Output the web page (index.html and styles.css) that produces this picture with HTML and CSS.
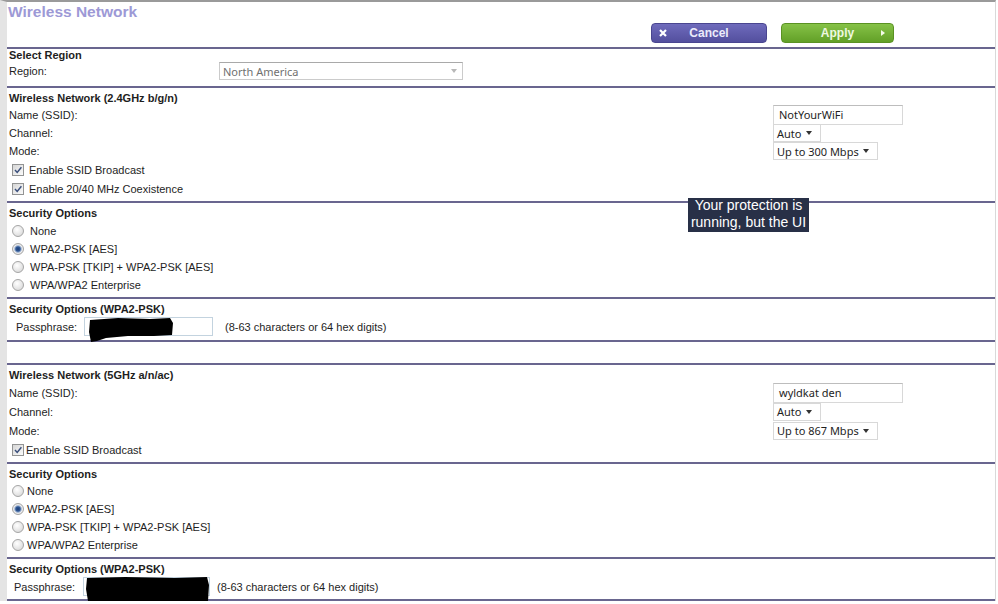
FILE: index.html
```html
<!DOCTYPE html>
<html>
<head>
    <meta charset="utf-8">
    <title>Wireless Network</title>
    <link rel="stylesheet" href="styles.css">
</head>
<body>
<div class="page">
    <div class="header">
        <div class="title">Wireless Network</div>
        <div class="btnbar">
            <div class="btn cancel">
                <svg width="8" height="8" viewBox="0 0 8 8"><path d="M1 1L7 7M7 1L1 7" stroke="#fff" stroke-width="2.2"/></svg>
                <span>Cancel</span><i></i>
            </div>
            <div class="btn apply">
                <i></i><span>Apply</span><span class="tri"></span>
            </div>
        </div>
    </div>

    <div class="sect region">
        <div class="hd">Select Region</div>
        <div class="row">
            <div class="lbl">Region:</div>
            <div class="sel s-region">North America<span class="caret"></span></div>
        </div>
    </div>

    <div class="sect">
        <div class="hd">Wireless Network (2.4GHz b/g/n)</div>
        <div class="row"><div class="lbl">Name (SSID):</div><div class="txt">NotYourWiFi</div></div>
        <div class="row"><div class="lbl">Channel:</div><div class="sel s-auto">Auto<span class="caret"></span></div></div>
        <div class="row"><div class="lbl">Mode:</div><div class="sel s-mode">Up to 300 Mbps<span class="caret"></span></div></div>
        <div class="chk"><span class="box"><svg width="10" height="10" viewBox="0 0 10 10"><path d="M2 5L4.2 7.4L8.4 2.2" fill="none" stroke="#3a4f7c" stroke-width="1.5"/></svg></span>Enable SSID Broadcast</div>
        <div class="chk"><span class="box"><svg width="10" height="10" viewBox="0 0 10 10"><path d="M2 5L4.2 7.4L8.4 2.2" fill="none" stroke="#3a4f7c" stroke-width="1.5"/></svg></span>Enable 20/40 MHz Coexistence</div>
    </div>

    <div class="sect">
        <div class="hd">Security Options</div>
        <div class="opts">
            <div class="opt"><span class="radio"></span>None</div>
            <div class="opt"><span class="radio on"></span>WPA2-PSK [AES]</div>
            <div class="opt"><span class="radio"></span>WPA-PSK [TKIP] + WPA2-PSK [AES]</div>
            <div class="opt"><span class="radio"></span>WPA/WPA2 Enterprise</div>
        </div>
    </div>

    <div class="sect sect-pass">
        <div class="hd">Security Options (WPA2-PSK)</div>
        <div class="pass-row">
            <div class="pass-lbl">Passphrase:</div>
            <div class="pass">
                <svg width="86" height="24" viewBox="0 0 86 24"><path d="M2 2L30 0L62 1L82 0L85 5L84 17L66 18L40 18L18 20L9 23L3 24L1 14Z" fill="#000"/></svg>
            </div>
            <div>(8-63 characters or 64 hex digits)</div>
        </div>
    </div>

    <div class="sect blank"></div>

    <div class="sect loose">
        <div class="hd">Wireless Network (5GHz a/n/ac)</div>
        <div class="row"><div class="lbl">Name (SSID):</div><div class="txt">wyldkat den</div></div>
        <div class="row"><div class="lbl">Channel:</div><div class="sel s-auto">Auto<span class="caret"></span></div></div>
        <div class="row"><div class="lbl">Mode:</div><div class="sel s-mode">Up to 867 Mbps<span class="caret"></span></div></div>
        <div class="chk"><span class="box"><svg width="10" height="10" viewBox="0 0 10 10"><path d="M2 5L4.2 7.4L8.4 2.2" fill="none" stroke="#3a4f7c" stroke-width="1.5"/></svg></span>Enable SSID Broadcast</div>
    </div>

    <div class="sect loose">
        <div class="hd">Security Options</div>
        <div class="opts">
            <div class="opt"><span class="radio"></span>None</div>
            <div class="opt"><span class="radio on"></span>WPA2-PSK [AES]</div>
            <div class="opt"><span class="radio"></span>WPA-PSK [TKIP] + WPA2-PSK [AES]</div>
            <div class="opt"><span class="radio"></span>WPA/WPA2 Enterprise</div>
        </div>
    </div>

    <div class="sect sect-pass loose">
        <div class="hd">Security Options (WPA2-PSK)</div>
        <div class="pass-row">
            <div class="pass-lbl">Passphrase:</div>
            <div class="pass">
                <svg width="124" height="24" viewBox="0 0 124 24"><path d="M2 1L40 0L90 1L122 0L124 8L123 24L60 24L3 24L1 12Z" fill="#000"/></svg>
            </div>
            <div>(8-63 characters or 64 hex digits)</div>
        </div>
    </div>
</div>

<div class="tip"><p>Your protection is<br>running, but the UI</p></div>
</body>
</html>
```

FILE: styles.css
```css
body{
    margin: 0;
    font-family: "Liberation Sans", Arial, sans-serif;
    font-size: 11px;
    color: #1e1e1e;
    background: #fff;
}
.page{
    width: 988px;
    border-left: 7px solid #e4e4e4;
    border-right: 1px solid #d9d9d9;
    border-top: 2px solid #9a9a9a;
}
.header{
    height: 45px;
}
.title{
    font-size: 15.5px;
    font-weight: bold;
    color: #9d99d6;
    line-height: 20px;
    padding-left: 1px;
}
.btnbar{
    display: flex;
    justify-content: flex-end;
    gap: 14px;
    padding-right: 101px;
    margin-top: 1px;
}
.btn{
    display: grid;
    align-items: center;
    justify-items: center;
    height: 20px;
    box-sizing: border-box;
    border-radius: 4px;
    font-size: 12px;
    font-weight: bold;
}
.btn svg{
    display: block;
}
.cancel{
    width: 116px;
    grid-template-columns: 8px 1fr 8px;
    padding: 0 7px;
    background: linear-gradient(#6f6bbc, #534f9e);
    border: 1px solid #4a4690;
    color: #ecebfa;
}
.apply{
    width: 113px;
    grid-template-columns: 4px 1fr 4px;
    padding: 0 8px;
    background: linear-gradient(#86c247, #62a027);
    border: 1px solid #5a9223;
    color: #eef8e0;
}
.tri{
    width: 0;
    height: 0;
    border-top: 3px solid transparent;
    border-bottom: 3px solid transparent;
    border-left: 4px solid #f4fbe8;
}

.sect{
    border-top: 2px solid #69668f;
    padding: 2px 0 3px 2px;
}
.hd{
    font-weight: bold;
    line-height: 16px;
}
.row{
    display: flex;
    align-items: center;
    height: 18px;
}
.lbl{
    flex: 0 0 764px;
}
.loose .row{
    height: 19px;
}

.region{
    padding-top: 0;
    padding-bottom: 5px;
}
.region .hd{
    line-height: 12px;
}
.region .row{
    height: 20px;
}
.region .lbl{
    flex-basis: 210px;
}

.txt{
    width: 130px;
    height: 20px;
    box-sizing: border-box;
    border: 1px solid #d8d8d8;
    border-top-color: #bdbdbd;
    padding-left: 5px;
    font-family: "Noto Sans", sans-serif;
    font-size: 11px;
    line-height: 18px;
}
.sel{
    display: flex;
    align-items: center;
    height: 18px;
    box-sizing: border-box;
    border: 1px solid #d8d8d8;
    padding: 0 8px 0 3px;
    font-family: "Noto Sans", sans-serif;
    font-size: 11px;
    white-space: nowrap;
}
.caret{
    margin-left: auto;
    width: 0;
    height: 0;
    border-left: 3px solid transparent;
    border-right: 3px solid transparent;
    border-top: 4px solid #333;
}
.s-auto{
    width: 48px;
}
.s-mode{
    width: 105px;
}
.s-region{
    width: 244px;
    color: #707070;
    padding-right: 5px;
    border-color: #cbcbcb;
    border-top-color: #a9a9a9;
}
.s-region .caret{
    border-top-color: #b8b8b8;
}

.chk{
    display: flex;
    align-items: center;
    height: 19px;
    padding-left: 3px;
}
.box{
    width: 10px;
    height: 10px;
    border: 1px solid #939494;
    background: linear-gradient(135deg, #d6d6d6, #fbfbfb);
    margin-right: 5px;
}
.box svg{
    display: block;
}
.loose .box{
    margin-right: 2px;
}

.opts{
    margin-top: 1px;
}
.loose .opts{
    margin-top: 0;
}
.opt{
    display: flex;
    align-items: center;
    height: 18px;
    padding-left: 3px;
}
.radio{
    width: 10px;
    height: 10px;
    border: 1px solid #a5a5a5;
    border-radius: 50%;
    background: radial-gradient(circle at 40% 35%, #fff, #d2d2d2);
    margin-right: 6px;
}
.radio.on{
    background: radial-gradient(circle, #1d3c74 0, #2f5896 2.2px, #9fb3d2 3.3px, #eeeeee 4.3px, #d2d2d2 100%);
}
.loose .radio{
    margin-right: 3px;
}

.sect-pass{
    padding-bottom: 4px;
}
.pass-row{
    display: flex;
    align-items: center;
    height: 19px;
}
.pass-lbl{
    width: 68px;
    padding-left: 7px;
}
.pass{
    position: relative;
    width: 129px;
    height: 19px;
    box-sizing: border-box;
    border: 1px solid #c3d3df;
    margin-right: 12px;
}
.pass svg{
    position: absolute;
    left: 3px;
    top: 0;
}
.loose .pass-lbl{
    width: 69px;
    padding-left: 5px;
}
.loose .pass{
    width: 127px;
    margin-right: 7px;
}
.loose .pass svg{
    left: 1px;
    top: -1px;
}
.loose.sect-pass{
    padding-bottom: 3px;
    border-bottom: 2px solid #69668f;
}
.blank{
    padding: 0;
    height: 21px;
}

.tip{
    position: absolute;
    left: 688px;
    top: 198px;
    width: 121px;
    height: 34px;
    overflow: hidden;
    background: #283047;
    color: #fff;
    font-size: 14px;
    line-height: 17px;
    text-align: center;
}
.tip p{
    margin: -1px 0 0;
}
```
